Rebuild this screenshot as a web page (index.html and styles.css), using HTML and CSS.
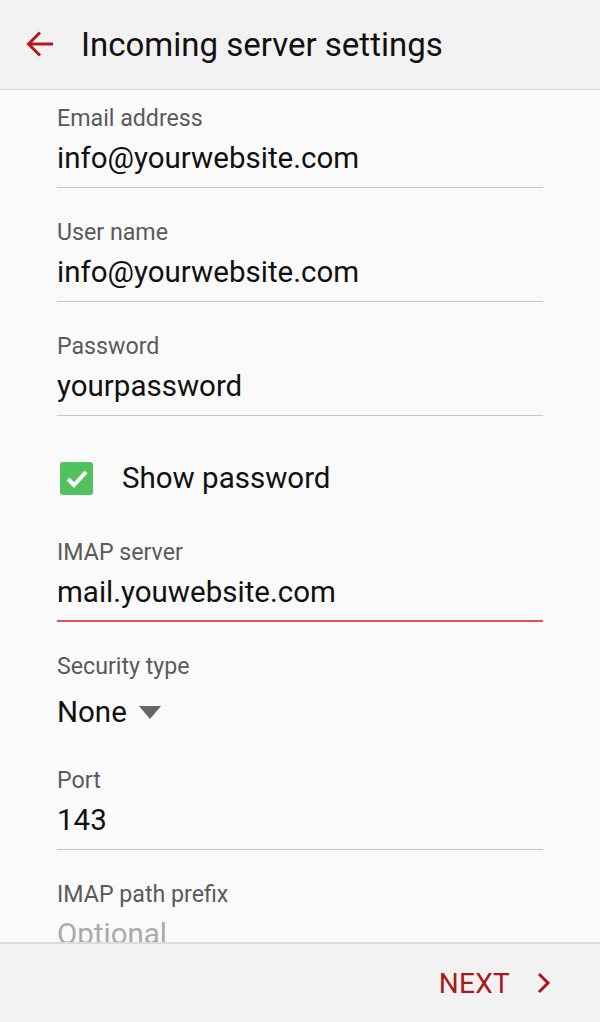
FILE: index.html
```html
<!DOCTYPE html>
<html>
<head>
<meta charset="utf-8">
<title>Incoming server settings</title>
<link rel="stylesheet" href="styles.css">
</head>
<body>
<div class="screen">
  <header class="appbar">
    <svg class="back" width="28" height="28" viewBox="0 0 28 28" aria-hidden="true">
      <path d="M27 14H2.5M14 2.5L2.5 14L14 25.5" fill="none" stroke="#b3181c" stroke-width="3" stroke-linecap="butt" stroke-linejoin="miter"/>
    </svg>
    <h1 class="title">Incoming server settings</h1>
  </header>

  <main class="content">
    <div class="form">
      <div class="field">
        <div class="label">Email address</div>
        <div class="value">info@yourwebsite.com</div>
      </div>
      <div class="field">
        <div class="label">User name</div>
        <div class="value">info@yourwebsite.com</div>
      </div>
      <div class="field">
        <div class="label">Password</div>
        <div class="value">yourpassword</div>
      </div>
      <div class="check-row">
        <span class="checkbox">
          <svg width="33" height="33" viewBox="0 0 33 33" aria-hidden="true">
            <path d="M8 17L14 23L26 10" fill="none" stroke="#fff" stroke-width="4"/>
          </svg>
        </span>
        <span class="check-label">Show password</span>
      </div>
      <div class="field field-active">
        <div class="label">IMAP server</div>
        <div class="value">mail.youwebsite.com</div>
      </div>
      <div class="field field-select">
        <div class="label">Security type</div>
        <div class="select">
          <span class="select-value">None</span>
          <svg class="caret" width="22" height="13" viewBox="0 0 22 13" aria-hidden="true">
            <path d="M0 0H22L11 13Z" fill="#666"/>
          </svg>
        </div>
      </div>
      <div class="field">
        <div class="label">Port</div>
        <div class="value">143</div>
      </div>
      <div class="field">
        <div class="label">IMAP path prefix</div>
        <div class="value placeholder">Optional</div>
      </div>
    </div>
  </main>

  <footer class="bottombar">
    <span class="next">NEXT</span>
    <svg class="chev" width="14" height="22" viewBox="0 0 14 22" aria-hidden="true">
      <path d="M2 2L11 11L2 20" fill="none" stroke="#a8191c" stroke-width="3"/>
    </svg>
  </footer>
</div>
</body>
</html>
```

FILE: styles.css
```css
* {
  box-sizing: border-box;
}

html, body {
  margin: 0;
  padding: 0;
}

body {
  font-family: Roboto, "Noto Sans", "Liberation Sans", sans-serif;
  background: #fafafa;
  color: #111;
}

.screen {
  width: 600px;
  height: 1022px;
  display: flex;
  flex-direction: column;
  overflow: hidden;
}

.appbar {
  flex: 0 0 auto;
  height: 90px;
  background: #f2f2f2;
  border-bottom: 1px solid #d8d8d8;
  display: flex;
  align-items: center;
  padding-left: 26px;
  padding-bottom: 1px;
}

.back {
  display: block;
  flex: 0 0 auto;
}

.title {
  margin: 0 0 0 27px;
  font-size: 33px;
  font-weight: 400;
  color: #111;
  letter-spacing: 0;
}

.content {
  flex: 1 1 auto;
  overflow: hidden;
  background: #fafafa;
}

.form {
  display: flex;
  flex-direction: column;
  gap: 31px;
  padding: 15px 57px 0 57px;
}

.field {
  border-bottom: 1px solid #c4c4c4;
  padding-bottom: 11px;
}

.field-active {
  border-bottom: 2px solid #e0504c;
  padding-bottom: 10px;
}

.field-select {
  border-bottom: none;
  padding-bottom: 6px;
}

.label {
  font-size: 23.2px;
  line-height: 26px;
  color: #5a5a5a;
}

.value {
  margin-top: 9px;
  font-size: 29.5px;
  line-height: 36px;
  color: #111;
}

.placeholder {
  color: #ababab;
}

.select {
  margin-top: 15px;
  display: flex;
  align-items: center;
  gap: 12px;
  height: 36px;
}

.select-value {
  font-size: 29.5px;
  line-height: 36px;
  color: #111;
}

.caret {
  display: block;
}

.check-row {
  display: flex;
  align-items: center;
  gap: 29px;
  padding: 13px 0 12px 3px;
}

.checkbox {
  width: 33px;
  height: 33px;
  border-radius: 3px;
  background: #52c25f;
  display: block;
}

.checkbox svg {
  display: block;
}

.check-label {
  font-size: 29.5px;
  line-height: 36px;
  color: #111;
}

.bottombar {
  flex: 0 0 80px;
  height: 80px;
  background: #f2f2f2;
  border-top: 2px solid #dcdcdc;
  display: flex;
  align-items: center;
  justify-content: flex-end;
  padding-right: 49px;
  gap: 27px;
}

.next {
  font-size: 28px;
  color: #a8191c;
  letter-spacing: 0.3px;
}

.chev {
  display: block;
}
```
